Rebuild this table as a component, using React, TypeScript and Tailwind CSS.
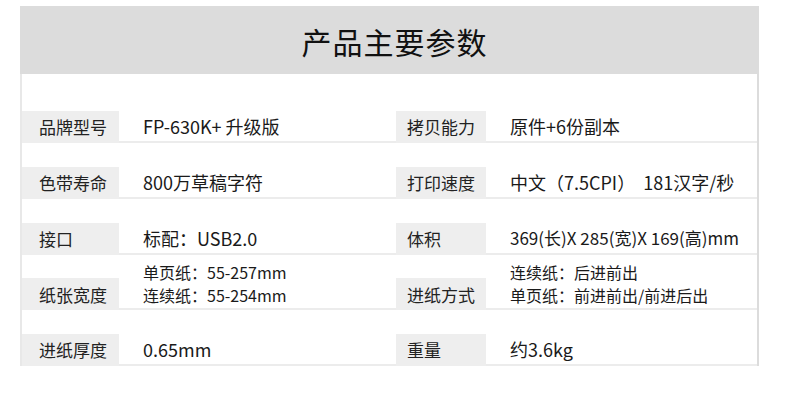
import React from 'react';

type Spec = {
  label: string;
  value: string | string[];
  size?: string;
};

const leftSpecs: Spec[] = [
  { label: '品牌型号', value: 'FP-630K+ 升级版' },
  { label: '色带寿命', value: '800万草稿字符' },
  { label: '接口', value: '标配：USB2.0' },
  { label: '纸张宽度', value: ['单页纸：55-257mm', '连续纸：55-254mm'] },
  { label: '进纸厚度', value: '0.65mm' },
];

const rightSpecs: Spec[] = [
  { label: '拷贝能力', value: '原件+6份副本' },
  { label: '打印速度', value: '中文（7.5CPI）\u00a0\u00a0181汉字/秒' },
  { label: '体积', value: '369(长)X 285(宽)X 169(高)mm', size: 'text-[17px]' },
  { label: '进纸方式', value: ['连续纸：后进前出', '单页纸：前进前出/前进后出'] },
  { label: '重量', value: '约3.6kg' },
];

function SpecCell({ spec, side }: { spec: Spec; side: 'left' | 'right' }) {
  const multi = Array.isArray(spec.value);
  return (
    <div className="flex h-[32px]">
      <div
        className={`bg-[#eeeeee] flex items-center text-[17px] text-[#222] shrink-0 ${
          side === 'left' ? 'w-[97px] pl-[17px]' : 'w-[90px] pl-[11px]'
        }`}
      >
        {spec.label}
      </div>
      <div
        className={`flex-1 border-b-2 border-[#ececec] flex flex-col pl-[24px] text-[#1a1a1a] ${
          multi ? 'justify-end pb-[1px]' : 'justify-center'
        }`}
      >
        {multi ? (
          (spec.value as string[]).map((line) => (
            <div key={line} className="text-[16px] leading-[23px] whitespace-nowrap">
              {line}
            </div>
          ))
        ) : (
          <div className={`${spec.size ?? 'text-[18px]'} leading-[24px] whitespace-nowrap`}>{spec.value}</div>
        )}
      </div>
    </div>
  );
}

export default function App() {
  return (
    <div
      className="w-[790px] h-[404px] bg-white pt-[6px] pl-[20px]"
      style={{ fontFamily: '"Noto Sans CJK SC", "Noto Sans", sans-serif' }}
    >
      <div className="w-[739px]">
        {/* Header */}
        <div className="h-[68px] bg-[#dcdcdc] flex items-center justify-center">
          <h1 className="text-[30px] text-[#111] tracking-[1px] pl-[10px] pt-[2px]">产品主要参数</h1>
        </div>

        {/* Spec grid */}
        <div className="border-l-2 border-r-2 border-l-[#e8e8e8] border-r-[#dcdcdc] pt-[37px] grid grid-cols-[374px_1fr] gap-y-[23.75px]">
          {leftSpecs.map((spec, i) => (
            <React.Fragment key={spec.label}>
              <SpecCell spec={spec} side="left" />
              <SpecCell spec={rightSpecs[i]} side="right" />
            </React.Fragment>
          ))}
        </div>
      </div>
    </div>
  );
}
